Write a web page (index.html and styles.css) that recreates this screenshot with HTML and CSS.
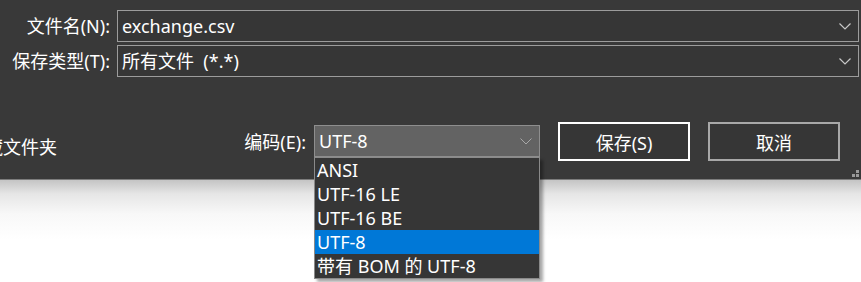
FILE: index.html
```html
<!DOCTYPE html>
<html lang="zh-CN">
<head>
    <meta charset="UTF-8">
    <meta name="viewport" content="width=device-width, initial-scale=1.0">
    <title>另存为</title>
    <link rel="stylesheet" href="styles.css">
</head>
<body>
    <div class="dialog">
        <!-- Поля имени и типа файла -->
        <div class="form">
            <label class="form-label">文件名(N):</label>
            <div class="combo">
                <span class="combo-text">exchange.csv</span>
                <svg class="chevron" width="12" height="7" viewBox="0 0 12 7"><path d="M0.5 0.5 L6 6 L11.5 0.5" fill="none" stroke="#c8c8c8" stroke-width="1.2"/></svg>
            </div>
            <label class="form-label">保存类型(T):</label>
            <div class="combo">
                <span class="combo-text">所有文件&nbsp; (*.*)</span>
                <svg class="chevron" width="12" height="7" viewBox="0 0 12 7"><path d="M0.5 0.5 L6 6 L11.5 0.5" fill="none" stroke="#c8c8c8" stroke-width="1.2"/></svg>
            </div>
        </div>

        <!-- Нижняя панель -->
        <div class="actions">
            <span class="folders">隐藏文件夹</span>
            <div class="actions-right">
                <label class="enc-label">编码(E):</label>
                <div class="select">
                    <span class="select-text">UTF-8</span>
                    <svg class="chevron" width="12" height="7" viewBox="0 0 12 7"><path d="M0.5 0.5 L6 6 L11.5 0.5" fill="none" stroke="#a8a8a8" stroke-width="1"/></svg>
                    <ul class="select-list">
                        <li>ANSI</li>
                        <li>UTF-16 LE</li>
                        <li>UTF-16 BE</li>
                        <li class="active">UTF-8</li>
                        <li>带有 BOM 的 UTF-8</li>
                    </ul>
                </div>
                <button class="btn btn-default">保存(S)</button>
                <button class="btn">取消</button>
            </div>
        </div>

        <div class="grip">
            <span></span><span></span><span></span>
        </div>
    </div>
</body>
</html>
```

FILE: styles.css
```css
/* Общие стили */
body {
    margin: 0;
    height: 282px;
    overflow: hidden;
    font-family: "Noto Sans", "Noto Sans CJK SC", sans-serif;
    font-size: 18px;
    color: #ffffff;
    background: linear-gradient(#c4c4c4 0px, #e6e6e6 14px, #f8f8f8 34px, #ffffff 60px) no-repeat 0 180px / 100% 102px;
    background-color: #ffffff;
}

.dialog {
    position: relative;
    height: 179px;
    background: #393939;
    border-bottom: 1px solid #7c7c7c;
}

/* Поля формы */
.form {
    display: grid;
    grid-template-columns: 110px 1fr;
    column-gap: 7px;
    row-gap: 3px;
    padding: 10px 2px 0 0;
}

.form-label {
    text-align: right;
    line-height: 32px;
    white-space: nowrap;
}

.combo {
    display: flex;
    align-items: center;
    height: 32px;
    box-sizing: border-box;
    border: 1px solid #9c9c9c;
    background: #363636;
    padding: 0 7px 0 4px;
}

.combo-text {
    flex: 1;
    line-height: 24px;
}

/* Нижняя панель */
.actions {
    display: flex;
    justify-content: space-between;
    align-items: center;
    margin-top: 45px;
    height: 39px;
}

.folders {
    margin-left: -33px;
    margin-top: 8px;
    white-space: nowrap;
}

.actions-right {
    display: flex;
    align-items: center;
    padding-right: 21px;
}

.enc-label {
    margin-right: 8px;
    margin-top: -2px;
}

.select {
    position: relative;
    display: flex;
    align-items: center;
    width: 226px;
    height: 32px;
    box-sizing: border-box;
    border: 1px solid #8e8e8e;
    background: #636363;
    padding: 0 7px 0 4px;
    margin-top: -1px;
}

.select-text {
    flex: 1;
    line-height: 24px;
}

.select-list {
    position: absolute;
    top: 31px;
    left: -1px;
    width: 226px;
    box-sizing: border-box;
    margin: 0;
    padding: 0;
    list-style: none;
    background: #363636;
    border: 1px solid #8a8a8a;
    box-shadow: 3px 3px 3px rgba(0, 0, 0, 0.35);
    z-index: 2;
}

.select-list li {
    height: 24px;
    line-height: 24px;
    padding-left: 2px;
    white-space: nowrap;
}

.select-list li.active {
    background: #0078d7;
}

.btn {
    width: 132px;
    height: 39px;
    margin-left: 18px;
    box-sizing: border-box;
    border: 2px solid #a8a8a8;
    background: #363636;
    color: #ffffff;
    font: inherit;
    padding: 0;
}

.btn-default {
    border-color: #ffffff;
}

/* Уголок изменения размера */
.grip {
    position: absolute;
    right: 2px;
    bottom: 2px;
    width: 7px;
    height: 7px;
}

.grip span {
    position: absolute;
    width: 3px;
    height: 3px;
    background: #9a9a9a;
}

.grip span:nth-child(1) { right: 0; top: 0; }
.grip span:nth-child(2) { right: 0; bottom: 0; }
.grip span:nth-child(3) { left: 0; bottom: 0; }
```
